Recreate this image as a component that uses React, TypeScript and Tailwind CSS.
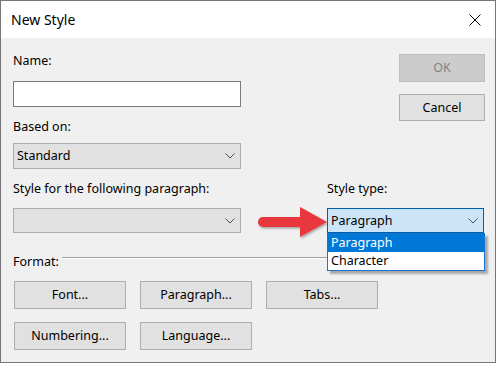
import React from "react"

function Chevron() {
  return (
    <svg width="10" height="6" viewBox="0 0 10 6" className="shrink-0">
      <polyline points="0.5,0.5 5,5 9.5,0.5" fill="none" stroke="#505050" strokeWidth="1" />
    </svg>
  )
}

function Btn({
  children,
  className = "",
  disabled = false,
}: {
  children?: React.ReactNode
  className?: string
  disabled?: boolean
}) {
  const look = disabled
    ? "border-[#bfbfbf] bg-[#cccccc] text-[#838383]"
    : "border-[#adadad] bg-[#e1e1e1] text-black"
  return (
    <button className={"flex items-center justify-center border text-[12.5px] leading-[18px] " + look + " " + className}>
      {children}
    </button>
  )
}

function Select({ value, className = "" }: { value?: string; className?: string }) {
  return (
    <div
      className={
        "flex items-center justify-between border border-[#adadad] bg-[#e1e1e1] pl-[3px] pr-[5px] text-black " +
        className
      }
    >
      <span>{value}</span>
      <Chevron />
    </div>
  )
}

function RedArrow() {
  return (
    <svg
      width="72"
      height="34"
      viewBox="0 0 72 34"
      className="pointer-events-none absolute left-[-70px] top-[-2px]"
    >
      <defs>
        <filter id="sh" x="-10%" y="-20%" width="130%" height="160%">
          <feDropShadow dx="1" dy="1.5" stdDeviation="1" floodColor="#000" floodOpacity="0.35" />
        </filter>
      </defs>
      <path
        d="M6 11 L43 11 L43 1 L70 16 L43 31 L43 21 L6 21 A5 5 0 0 1 6 11 Z"
        fill="#e9393d"
        filter="url(#sh)"
      />
    </svg>
  )
}

export default function App() {
  return (
    <div className="relative h-[366px] w-[497px] overflow-hidden bg-white [font-family:Noto_Sans,sans-serif]">
      <div className="flex h-[363px] w-[496px] flex-col border border-[#777777]">
        {/* title bar */}
        <div className="flex h-[37px] shrink-0 items-center justify-between bg-white pl-[10px] pr-[14px]">
          <span className="text-[14px] leading-[20px] text-black">New Style</span>
          <svg width="12" height="12" viewBox="0 0 12 12">
            <path d="M0.5 0.5 L11.5 11.5 M11.5 0.5 L0.5 11.5" stroke="#000" strokeWidth="1" />
          </svg>
        </div>

        {/* body */}
        <div className="flex-1 bg-[#f0f0f0] pl-[12px] pr-[10px] text-[12.5px] leading-[18px] text-black">
          <div className="flex justify-between">
            <div className="w-[228px] pt-[14px]">
              <div>Name:</div>
              <div className="mt-[11px] h-[26px] border border-[#7a7a7a] bg-white" />
              <div className="mt-[11px]">Based on:</div>
              <Select value="Standard" className="mt-[7px] h-[26px]" />
            </div>
            <div className="w-[86px] pt-[16px]">
              <Btn disabled className="h-[28px] w-full">OK</Btn>
              <Btn className="mt-[12px] h-[27px] w-full">Cancel</Btn>
            </div>
          </div>

          <div className="mt-[11px] flex">
            <div className="w-[228px]">
              <div>Style for the following paragraph:</div>
              <Select className="mt-[10px] h-[25px]" />
            </div>
            <div className="ml-[86px] w-[157px]">
              <div>Style type:</div>
              <div className="relative mt-[10px]">
                <div className="flex h-[25px] items-center justify-between border border-[#0060b0] bg-[#cce4f7] pl-[3px] pr-[5px]">
                  <span>Paragraph</span>
                  <Chevron />
                </div>
                <div className="absolute left-0 top-full z-10 w-[158px] border border-[#1a73cc] bg-white shadow-[3px_3px_2px_rgba(0,0,0,0.3)]">
                  <div className="h-[18px] bg-[#0078d7] pl-[3px] leading-[18px] text-white">Paragraph</div>
                  <div className="h-[18px] pl-[3px] leading-[18px]">Character</div>
                </div>
                <RedArrow />
              </div>
            </div>
          </div>

          <div className="mt-[20px] flex">
            <span>Format:</span>
            <div className="ml-[3px] mt-[4px] h-[2px] flex-1 border-t border-b border-t-[#a0a0a0] border-b-white" />
          </div>

          <div className="ml-[1px] mt-[10px] grid grid-cols-[112px_112px_112px] gap-x-[14px] gap-y-[13px]">
            <Btn className="h-[28px]">Font...</Btn>
            <Btn className="h-[28px]">Paragraph...</Btn>
            <Btn className="h-[28px]">Tabs...</Btn>
            <Btn className="h-[28px]">Numbering...</Btn>
            <Btn className="h-[28px]">Language...</Btn>
          </div>
        </div>
      </div>
    </div>
  )
}
